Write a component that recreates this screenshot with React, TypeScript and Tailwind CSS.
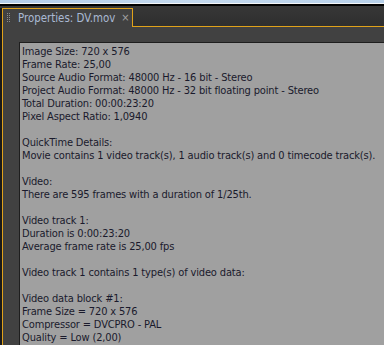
import React from 'react';

const lines = [
  'Image Size: 720 x 576',
  'Frame Rate: 25,00',
  'Source Audio Format: 48000 Hz - 16 bit - Stereo',
  'Project Audio Format: 48000 Hz - 32 bit floating point - Stereo',
  'Total Duration: 00:00:23:20',
  'Pixel Aspect Ratio: 1,0940',
  '',
  'QuickTime Details:',
  'Movie contains 1 video track(s), 1 audio track(s) and 0 timecode track(s).',
  '',
  'Video:',
  'There are 595 frames with a duration of 1/25th.',
  '',
  'Video track 1:',
  'Duration is 0:00:23:20',
  'Average frame rate is 25,00 fps',
  '',
  'Video track 1 contains 1 type(s) of video data:',
  '',
  'Video data block #1:',
  'Frame Size = 720 x 576',
  'Compressor = DVCPRO - PAL',
  'Quality = Low (2,00)',
];

const App = () => {
  return (
    <div className="w-[384px] h-[345px] overflow-hidden flex flex-col bg-[#333333]" style={{ fontFamily: '"DejaVu Sans Condensed", "DejaVu Sans", Tahoma, sans-serif' }}>
      {/* window chrome */}
      <div className="h-[3px] bg-gradient-to-r from-[#b4cde8] via-[#c4d9ee] to-[#b8d1ea] shrink-0" />
      <div className="h-px bg-[#f4f6f8] shrink-0" />
      <div className="h-[2px] bg-black shrink-0" />

      {/* tab strip */}
      <div className="flex h-[21px] shrink-0 bg-gradient-to-b from-[#373737] to-[#2e2e2e]">
        <div className="w-[3px] flex flex-col">
          <div className="h-[2px]" />
          <div className="flex-1 flex">
            <div className="w-[2px] bg-[#1a1a1a]" />
            <div className="w-px bg-[#e0a21a]" />
          </div>
        </div>
        <div className="flex flex-col w-[130px] shrink-0">
          <div className="h-[2px]" />
          <div className="flex-1 flex items-start bg-[#414141] border-t border-r border-[#e0a21a] pl-[4px] whitespace-nowrap">
            {/* grip */}
            <div className="grid grid-cols-2 gap-px w-[3px] mr-[8px] mt-[4px] shrink-0">
              {Array.from({ length: 10 }).map((_, i) => (
                <div key={i} className="w-px h-px bg-[#8c8c8c]" />
              ))}
            </div>
            <span className="text-[11.4px] text-[#a9b9d3] leading-[14px] mt-[2px]">Properties: DV.mov</span>
            <span className="ml-[6px] text-[11px] text-[#a0a0a0] leading-[14px] mt-[2px]">×</span>
          </div>
        </div>
        <div className="flex-1 flex flex-col">
          <div className="flex-1" />
          <div className="h-px bg-[#e0a21a]" />
        </div>
      </div>

      {/* panel */}
      <div className="flex-1 flex bg-[#414141]">
        <div className="w-[2px] bg-[#1a1a1a]" />
        <div className="w-px bg-[#e0a21a]" />
        <div className="flex-1 pl-[16px] pt-[15px]">
          <div className="h-full border-l border-t border-[#1e1e1e] bg-[#a0a0a0] pl-[2px] pt-[2px] text-[11px] leading-[13px] text-[#1a1a2c] whitespace-nowrap tracking-[-0.15px]">
            {lines.map((l, i) => (
              <div key={i} className="h-[13px]">{l}</div>
            ))}
          </div>
        </div>
      </div>
    </div>
  );
};

export default App;
